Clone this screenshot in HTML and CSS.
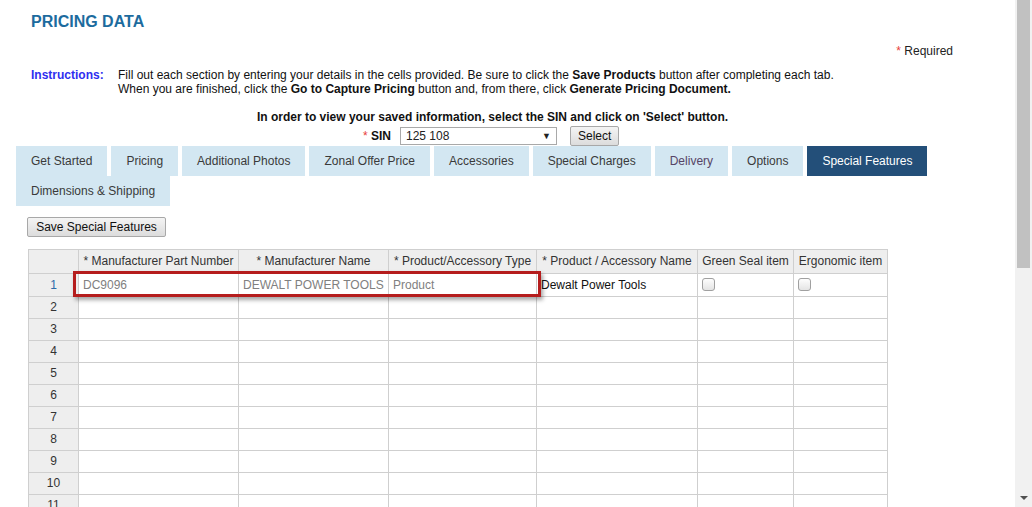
FILE: index.html
```html
<!DOCTYPE html>
<html>
<head>
<meta charset="utf-8">
<title>Pricing Data</title>
<link rel="stylesheet" href="styles.css">
</head>
<body>
<div class="page">
  <h1 class="title">PRICING DATA</h1>
  <div class="required"><span class="star">*</span> Required</div>
  <div class="instructions">
    <div class="instr-label">Instructions:</div>
    <div class="instr-text">
      <div>Fill out each section by entering your details in the cells provided. Be sure to click the <b>Save Products</b> button after completing each tab.</div>
      <div>When you are finished, click the <b>Go to Capture Pricing</b> button and, from there, click <b>Generate Pricing Document.</b></div>
    </div>
  </div>
  <div class="view-note">In order to view your saved information, select the SIN and click on 'Select' button.</div>
  <div class="sin-row">
    <span class="sin-label"><span class="star">*</span> <b>SIN</b></span>
    <div class="select"><span>125 108</span><span class="arrow">▼</span></div>
    <button class="btn btn-select">Select</button>
  </div>
  <div class="tabs">
    <div class="tab">Get Started</div>
    <div class="tab">Pricing</div>
    <div class="tab">Additional Photos</div>
    <div class="tab">Zonal Offer Price</div>
    <div class="tab">Accessories</div>
    <div class="tab">Special Charges</div>
    <div class="tab visited">Delivery</div>
    <div class="tab">Options</div>
    <div class="tab active">Special Features</div>
    <div class="tab">Dimensions &amp; Shipping</div>
  </div>
  <button class="btn btn-save">Save Special Features</button>
  <div class="table-wrap">
    <table class="grid">
      <colgroup>
        <col class="c-num"><col class="c1"><col class="c2"><col class="c3"><col class="c4"><col class="c5"><col class="c6">
      </colgroup>
      <thead>
        <tr>
          <th></th>
          <th>* Manufacturer Part Number</th>
          <th>* Manufacturer Name</th>
          <th>* Product/Accessory Type</th>
          <th>* Product / Accessory Name</th>
          <th>Green Seal item</th>
          <th>Ergonomic item</th>
        </tr>
      </thead>
      <tbody>
        <tr class="first">
          <td class="num sel">1</td>
          <td class="ro">DC9096</td>
          <td class="ro">DEWALT POWER TOOLS</td>
          <td class="ro">Product</td>
          <td>Dewalt Power Tools</td>
          <td><span class="cb"></span></td>
          <td><span class="cb"></span></td>
        </tr>
        <tr><td class="num">2</td><td></td><td></td><td></td><td></td><td></td><td></td></tr>
        <tr><td class="num">3</td><td></td><td></td><td></td><td></td><td></td><td></td></tr>
        <tr><td class="num">4</td><td></td><td></td><td></td><td></td><td></td><td></td></tr>
        <tr><td class="num">5</td><td></td><td></td><td></td><td></td><td></td><td></td></tr>
        <tr><td class="num">6</td><td></td><td></td><td></td><td></td><td></td><td></td></tr>
        <tr><td class="num">7</td><td></td><td></td><td></td><td></td><td></td><td></td></tr>
        <tr><td class="num">8</td><td></td><td></td><td></td><td></td><td></td><td></td></tr>
        <tr><td class="num">9</td><td></td><td></td><td></td><td></td><td></td><td></td></tr>
        <tr><td class="num">10</td><td></td><td></td><td></td><td></td><td></td><td></td></tr>
        <tr><td class="num">11</td><td></td><td></td><td></td><td></td><td></td><td></td></tr>
      </tbody>
    </table>
    <div class="highlight"></div>
  </div>
</div>
<div class="scrollbar">
  <div class="thumb"></div>
  <div class="down"></div>
</div>
</body>
</html>
```

FILE: styles.css
```css
html, body {
  margin: 0;
  padding: 0;
  height: 507px;
  overflow: hidden;
  background: #fff;
}
body {
  font-family: "Liberation Sans", Arial, sans-serif;
  font-size: 12px;
  color: #222;
}
.page {
  width: 953px;
  padding-left: 16px;
}
.title {
  margin: 13px 0 0 15px;
  font-size: 16px;
  line-height: 18px;
  font-weight: bold;
  color: #1c6b9e;
}
.required {
  margin-top: 13px;
  text-align: right;
  padding-right: 16px;
  line-height: 14px;
  color: #222;
}
.star {
  color: #e8403a;
}
.instructions {
  display: flex;
  margin-top: 10px;
  line-height: 14px;
}
.instr-label {
  width: 87px;
  padding-left: 15px;
  font-weight: bold;
  color: #2e2ef0;
}
.instr-text {
  color: #111;
}
.view-note {
  margin-top: 14px;
  text-align: center;
  font-weight: bold;
  line-height: 14px;
  color: #111;
}
.sin-row {
  display: flex;
  justify-content: center;
  align-items: center;
  height: 21px;
  margin-top: 1px;
  padding-right: 3px;
}
.sin-label {
  margin-right: 9px;
  color: #111;
}
.select {
  width: 157px;
  height: 18px;
  box-sizing: border-box;
  border: 1px solid #a9a9a9;
  display: flex;
  align-items: center;
  justify-content: space-between;
  padding: 0 5px 0 5px;
  color: #222;
  font-size: 12px;
  margin-right: 13px;
}
.select .arrow {
  font-size: 9px;
  color: #222;
}
.btn {
  font-family: "Liberation Sans", Arial, sans-serif;
  font-size: 12px;
  color: #111;
  background: linear-gradient(#f4f4f4, #dcdcdc);
  border: 1px solid #a8a8a8;
  border-radius: 2px;
  height: 20px;
  padding: 0 7px;
  line-height: 18px;
  margin: 0;
}
.btn-select {
  width: 49px;
}
.tabs {
  display: flex;
  flex-wrap: wrap;
  column-gap: 4px;
  row-gap: 0;
  width: 940px;
}
.tab {
  height: 30px;
  line-height: 30px;
  padding: 0 15px;
  background: #d3e7f2;
  color: #3a3a3a;
}
.tab.visited {
  color: #564466;
}
.tab.active {
  background: #234f79;
  color: #fff;
}
.btn-save {
  display: block;
  margin: 11px 0 0 11px;
  width: 139px;
  padding: 0;
}
.table-wrap {
  position: relative;
  margin: 12px 0 0 12px;
}
.grid {
  border-collapse: collapse;
  table-layout: fixed;
  width: 859px;
  font-size: 12px;
}
.c-num { width: 50px; }
.c1 { width: 160px; }
.c2 { width: 150px; }
.c3 { width: 148px; }
.c4 { width: 161px; }
.c5 { width: 96px; }
.c6 { width: 94px; }
.grid th, .grid td {
  border: 1px solid #cfcfcf;
  padding: 0 4px;
  height: 21px;
  line-height: 21px;
  white-space: nowrap;
  overflow: hidden;
}
.grid th {
  background: #eeeeee;
  font-weight: normal;
  color: #333;
  height: 23px;
  text-align: center;
}
.grid tr.first td {
  height: 22px;
  line-height: 22px;
}
.grid td.num {
  background: #eeeeee;
  text-align: center;
  color: #333;
}
.grid td.num.sel {
  color: #2d6aa8;
}
.grid td.ro {
  color: #808080;
}
.grid td:nth-child(5) {
  color: #111;
}
.cb {
  display: inline-block;
  width: 11px;
  height: 11px;
  border: 1px solid #a0a0a0;
  border-radius: 3px;
  background: linear-gradient(#fdfdfd, #e4e4e4);
  vertical-align: middle;
  margin-top: -3px;
}
.highlight {
  position: absolute;
  left: 45px;
  top: 22px;
  width: 462px;
  height: 20px;
  border: 3px solid #b51d1d;
  box-shadow: 2px 3px 4px rgba(0, 0, 0, 0.35);
}
.scrollbar {
  position: fixed;
  top: 0;
  right: 0;
  width: 17px;
  height: 507px;
  background: #f1f1f1;
}
.thumb {
  position: absolute;
  left: 2px;
  top: 0;
  width: 13px;
  height: 268px;
  background: #c1c1c1;
}
.down {
  position: absolute;
  left: 5px;
  bottom: 7px;
  width: 0;
  height: 0;
  border-left: 4px solid transparent;
  border-right: 4px solid transparent;
  border-top: 4px solid #505050;
}
```
